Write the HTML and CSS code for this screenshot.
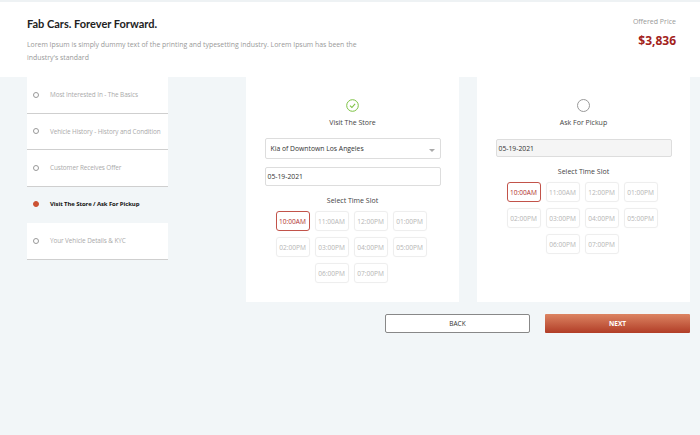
FILE: index.html
```html
<!DOCTYPE html>
<html>
<head>
<meta charset="utf-8">
<link rel="stylesheet" href="styles.css">
</head>
<body>
<div class="topstrip"></div>
<header class="header">
  <div class="intro">
    <h1 class="title">Fab Cars. Forever Forward.</h1>
    <p class="desc">Lorem Ipsum is simply dummy text of the printing and typesetting industry. Lorem Ipsum has been the industry's standard</p>
  </div>
  <div class="price">
    <div class="price-label">Offered Price</div>
    <div class="price-value">$3,836</div>
  </div>
</header>
<main class="main">
  <ul class="steps">
    <li class="step"><span class="dot"></span>Most Interested In - The Basics</li>
    <li class="step"><span class="dot"></span>Vehicle History - History and Condition</li>
    <li class="step"><span class="dot"></span>Customer Receives Offer</li>
    <li class="step active"><span class="dot"></span>Visit The Store / Ask For Pickup</li>
    <li class="step"><span class="dot"></span>Your Vehicle Details &amp; KYC</li>
  </ul>
  <div class="right">
    <div class="cards">
      <section class="card">
        <svg class="check" width="13" height="13" viewBox="0 0 13 13"><circle cx="6.5" cy="6.5" r="5.8" fill="none" stroke="#7cc242" stroke-width="1"/><path d="M4 6.7 L5.9 8.5 L9.1 4.8" fill="none" stroke="#7cc242" stroke-width="1.1"/></svg>
        <div class="card-title">Visit The Store</div>
        <div class="field select">Kia of Downtown Los Angeles<span class="caret"></span></div>
        <div class="field date">05-19-2021</div>
        <div class="slot-title">Select Time Slot</div>
        <div class="slots">
          <span class="slot sel">10:00AM</span><span class="slot">11:00AM</span><span class="slot">12:00PM</span><span class="slot">01:00PM</span>
          <span class="slot">02:00PM</span><span class="slot">03:00PM</span><span class="slot">04:00PM</span><span class="slot">05:00PM</span>
          <span class="slot">06:00PM</span><span class="slot">07:00PM</span>
        </div>
      </section>
      <section class="card">
        <span class="radio"></span>
        <div class="card-title">Ask For Pickup</div>
        <div class="field date disabled">05-19-2021</div>
        <div class="slot-title">Select Time Slot</div>
        <div class="slots">
          <span class="slot sel">10:00AM</span><span class="slot">11:00AM</span><span class="slot">12:00PM</span><span class="slot">01:00PM</span>
          <span class="slot">02:00PM</span><span class="slot">03:00PM</span><span class="slot">04:00PM</span><span class="slot">05:00PM</span>
          <span class="slot">06:00PM</span><span class="slot">07:00PM</span>
        </div>
      </section>
    </div>
    <div class="actions">
      <button class="btn back">BACK</button>
      <button class="btn next">NEXT</button>
    </div>
  </div>
</main>
</body>
</html>
```
FILE: styles.css
```css
* { box-sizing: border-box; }
html, body { margin: 0; padding: 0; }
body {
  width: 700px;
  height: 435px;
  background: #f2f6f8;
  font-family: "Open Sans", "Liberation Sans", sans-serif;
  overflow: hidden;
}
.topstrip { height: 2px; background: #eef2f4; }
.header {
  background: #fff;
  height: 75px;
  display: flex;
  justify-content: space-between;
  padding: 0 24px 0 27px;
}
.intro { padding-top: 14px; }
.title {
  margin: 0;
  font-family: Lato, "Open Sans", sans-serif;
  font-size: 11px;
  line-height: 15px;
  font-weight: 700;
  color: #222;
}
.desc {
  margin: 7px 0 0;
  width: 335px;
  font-size: 6.9px;
  line-height: 13px;
  color: #999;
}
.price { text-align: right; padding-top: 15px; }
.price-label { font-size: 7px; color: #999; }
.price-value {
  margin-top: 6px;
  font-size: 12px;
  font-weight: 700;
  color: #a3231b;
}
.main {
  display: flex;
  padding-left: 27px;
}
.steps {
  list-style: none;
  margin: 0;
  padding: 0;
  width: 141px;
}
.step {
  height: 36.5px;
  background: #fff;
  border-bottom: 1px solid #cfcfcf;
  display: flex;
  align-items: center;
  padding-left: 6px;
  font-size: 6.4px;
  color: #aaa;
  letter-spacing: -0.1px;
}
.dot {
  width: 6px;
  height: 6px;
  border: 1px solid #999;
  border-radius: 50%;
  margin-right: 11px;
  flex: none;
}
.step.active {
  background: transparent;
  border-bottom-color: transparent;
  color: #111;
  font-weight: 700;
  font-size: 6px;
}
.step.active .dot { background: #cc5233; border-color: #cc5233; }
.right { margin-left: 78px; }
.cards { display: flex; gap: 18px; }
.card {
  width: 213px;
  height: 225px;
  background: #fff;
  display: flex;
  flex-direction: column;
  align-items: center;
  padding-top: 22px;
}
.check { display: block; }
.radio {
  width: 13px;
  height: 13px;
  border: 1px solid #999;
  border-radius: 50%;
}
.card-title {
  margin-top: 6px;
  font-size: 7px;
  color: #444;
}
.field {
  width: 176px;
  border: 1px solid #ddd;
  border-radius: 2px;
  font-size: 6.8px;
  color: #333;
  display: flex;
  align-items: center;
  padding-left: 5px;
  position: relative;
}
.select { height: 21px; margin-top: 11px; }
.date { height: 19px; margin-top: 8px; padding-left: 2px; }
.date.disabled { background: #f5f5f5; margin-top: 12px; height: 18px; }
.caret {
  position: absolute;
  right: 5px;
  top: 10px;
  border-left: 3px solid transparent;
  border-right: 3px solid transparent;
  border-top: 3px solid #aaa;
}
.slot-title {
  margin-top: 10px;
  font-size: 7px;
  color: #444;
}
.slots {
  margin-top: 6px;
  width: 151px;
  margin-right: 3px;
  display: flex;
  flex-wrap: wrap;
  justify-content: center;
  gap: 6px 5px;
}
.slot {
  width: 34px;
  height: 20px;
  border: 1px solid #eee;
  border-radius: 3px;
  box-shadow: 0 0 1px rgba(0,0,0,0.05);
  font-size: 6.6px;
  color: #b5b5b5;
  display: flex;
  align-items: center;
  justify-content: center;
}
.slot.sel { border-color: #c2534a; color: #b0302a; }
.actions {
  display: flex;
  justify-content: space-between;
  margin-top: 12px;
  margin-left: 139px;
  width: 305px;
}
.btn {
  width: 145px;
  height: 19px;
  font-family: "Open Sans", "Liberation Sans", sans-serif;
  font-size: 6.5px;
  padding: 0;
  cursor: pointer;
}
.back {
  background: #fff;
  border: 1px solid #888;
  border-radius: 2px;
  color: #333;
}
.next {
  border: none;
  border-radius: 1px;
  color: #fff;
  font-weight: 700;
  background: linear-gradient(#dc8462, #b13d27);
}
```
